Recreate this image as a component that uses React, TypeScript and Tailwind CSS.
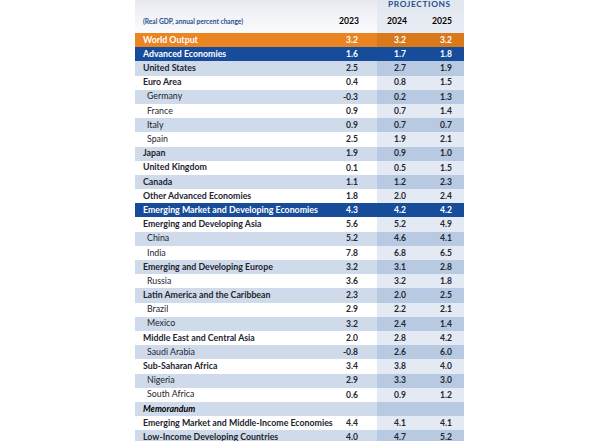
type Row = {
  label: string;
  v: [string, string, string];
  kind?: "world" | "group" | "sub" | "bold" | "memo";
};

const rows: Row[] = [
  { label: "World Output", v: ["3.2", "3.2", "3.2"], kind: "world" },
  { label: "Advanced Economies", v: ["1.6", "1.7", "1.8"], kind: "group" },
  { label: "United States", v: ["2.5", "2.7", "1.9"], kind: "bold" },
  { label: "Euro Area", v: ["0.4", "0.8", "1.5"], kind: "bold" },
  { label: "Germany", v: ["-0.3", "0.2", "1.3"], kind: "sub" },
  { label: "France", v: ["0.9", "0.7", "1.4"], kind: "sub" },
  { label: "Italy", v: ["0.9", "0.7", "0.7"], kind: "sub" },
  { label: "Spain", v: ["2.5", "1.9", "2.1"], kind: "sub" },
  { label: "Japan", v: ["1.9", "0.9", "1.0"], kind: "bold" },
  { label: "United Kingdom", v: ["0.1", "0.5", "1.5"], kind: "bold" },
  { label: "Canada", v: ["1.1", "1.2", "2.3"], kind: "bold" },
  { label: "Other Advanced Economies", v: ["1.8", "2.0", "2.4"], kind: "bold" },
  { label: "Emerging Market and Developing Economies", v: ["4.3", "4.2", "4.2"], kind: "group" },
  { label: "Emerging and Developing Asia", v: ["5.6", "5.2", "4.9"], kind: "bold" },
  { label: "China", v: ["5.2", "4.6", "4.1"], kind: "sub" },
  { label: "India", v: ["7.8", "6.8", "6.5"], kind: "sub" },
  { label: "Emerging and Developing Europe", v: ["3.2", "3.1", "2.8"], kind: "bold" },
  { label: "Russia", v: ["3.6", "3.2", "1.8"], kind: "sub" },
  { label: "Latin America and the Caribbean", v: ["2.3", "2.0", "2.5"], kind: "bold" },
  { label: "Brazil", v: ["2.9", "2.2", "2.1"], kind: "sub" },
  { label: "Mexico", v: ["3.2", "2.4", "1.4"], kind: "sub" },
  { label: "Middle East and Central Asia", v: ["2.0", "2.8", "4.2"], kind: "bold" },
  { label: "Saudi Arabia", v: ["-0.8", "2.6", "6.0"], kind: "sub" },
  { label: "Sub-Saharan Africa", v: ["3.4", "3.8", "4.0"], kind: "bold" },
  { label: "Nigeria", v: ["2.9", "3.3", "3.0"], kind: "sub" },
  { label: "South Africa", v: ["0.6", "0.9", "1.2"], kind: "sub" },
  { label: "Memorandum", v: ["", "", ""], kind: "memo" },
  { label: "Emerging Market and Middle-Income Economies", v: ["4.4", "4.1", "4.1"], kind: "bold" },
  { label: "Low-Income Developing Countries", v: ["4.0", "4.7", "5.2"], kind: "bold" },
];

function TableRow({ row, index }: { row: Row; index: number }) {
  const { label, v, kind } = row;
  const shaded = index % 2 === 0;

  let base = shaded ? "bg-[#cfdbea]" : "bg-white";
  let proj = shaded ? "bg-[#b8cae2]" : "bg-[#e3eaf4]";
  let text = "text-[#23252f]";
  if (kind === "world") {
    base = "bg-[#ea8521]";
    proj = "bg-[#d9791c]";
    text = "text-white";
  } else if (kind === "group") {
    base = "bg-[#174c9b]";
    proj = "bg-[#174c9b]";
    text = "text-white";
  }

  const labelCls =
    kind === "sub"
      ? "pl-[12px] font-normal"
      : kind === "memo"
      ? "pl-[8px] font-bold italic text-black"
      : "pl-[8px] font-bold";

  return (
    <div className={`flex h-[14.2px] items-center text-[8.8px] leading-none ${base} ${text}`}>
      <div className={`flex-1 whitespace-nowrap ${labelCls}`}>{label}</div>
      <div className="w-[54px] pr-[19px] text-right text-[8.5px] font-bold">{v[0]}</div>
      <div className={`flex h-full w-[87px] items-center text-[8.5px] font-bold ${proj}`}>
        <div className="w-[40px] pr-[11px] text-right">{v[1]}</div>
        <div className="w-[47px] pr-[12px] text-right">{v[2]}</div>
      </div>
    </div>
  );
}

export default function App() {
  return (
    <div
      className="h-[441px] w-[600px] overflow-hidden bg-white"
      style={{ fontFamily: "Lato, 'Noto Sans', sans-serif" }}
    >
      <div className="ml-[135px] w-[329px]">
        {/* Header */}
        <div className="flex h-[33px] bg-gradient-to-b from-[#e6e9ee] via-[#f3f4f7] to-[#fafbfc]">
          <div className="flex flex-1 items-end pb-[8px] pl-[8px] text-[6.6px] leading-none font-bold text-[#1f4f8f]">
            (Real GDP, annual percent change)
          </div>
          <div className="flex w-[54px] items-end justify-end pb-[7px] pr-[18px] text-[8.6px] leading-none font-bold text-black">
            2023
          </div>
          <div className="flex w-[87px] flex-col bg-[#dfe6ef]/70">
            <div className="pl-[11px] text-[8.4px] leading-[8px] font-bold tracking-[0.6px] text-[#1f4f8f]">
              PROJECTIONS
            </div>
            <div className="mt-auto flex pb-[7px] text-[8.6px] leading-none font-bold text-black">
              <div className="w-[40px] pr-[10px] text-right">2024</div>
              <div className="w-[47px] pr-[12px] text-right">2025</div>
            </div>
          </div>
        </div>
        {/* Body */}
        {rows.map((row, i) => (
          <TableRow key={row.label} row={row} index={i} />
        ))}
      </div>
    </div>
  );
}
